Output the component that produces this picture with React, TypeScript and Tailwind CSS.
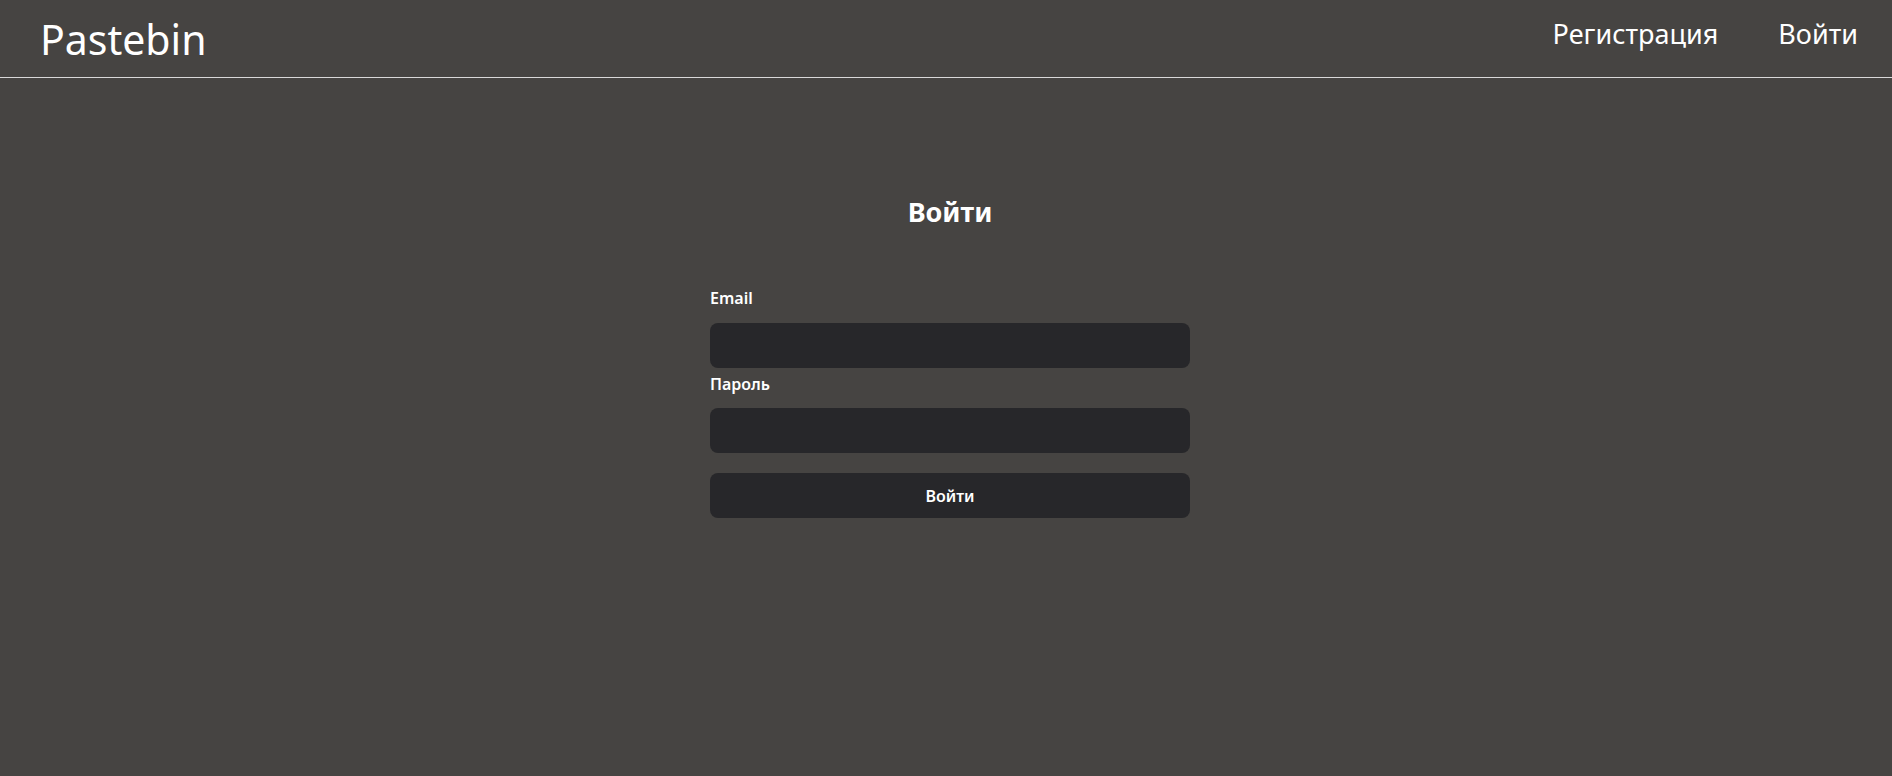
export default function App() {
  return (
    <div className="min-h-[776px] bg-[#464442] text-white" style={{ fontFamily: '"Noto Sans", "Open Sans", sans-serif' }}>
      <header className="flex h-[78px] items-start justify-between border-b border-[#d9d9d9] pl-[40px] pr-[34px]">
        <a className="pt-[11px] text-[41px] leading-[56px] font-normal">Pastebin</a>
        <nav className="flex gap-[60px] pt-[14px] text-[27px] leading-[40px]">
          <a>Регистрация</a>
          <a>Войти</a>
        </nav>
      </header>

      <main className="flex flex-col items-center pl-[8px] pt-[116px]">
        <h1 className="text-[27px] leading-[36px] font-bold">Войти</h1>
        <form className="mt-[57px] flex w-[480px] flex-col">
          <label className="text-[16px] leading-[22px] font-semibold">Email</label>
          <input type="email" className="mt-[14px] h-[45px] rounded-[8px] bg-[#27272a] px-3 outline-none" />
          <label className="mt-[5px] text-[16px] leading-[22px] font-semibold">Пароль</label>
          <input type="password" className="mt-[13px] h-[45px] rounded-[8px] bg-[#27272a] px-3 outline-none" />
          <button type="button" className="mt-[20px] h-[45px] rounded-[8px] bg-[#27272a] text-[16px] font-semibold">
            Войти
          </button>
        </form>
      </main>
    </div>
  );
}
